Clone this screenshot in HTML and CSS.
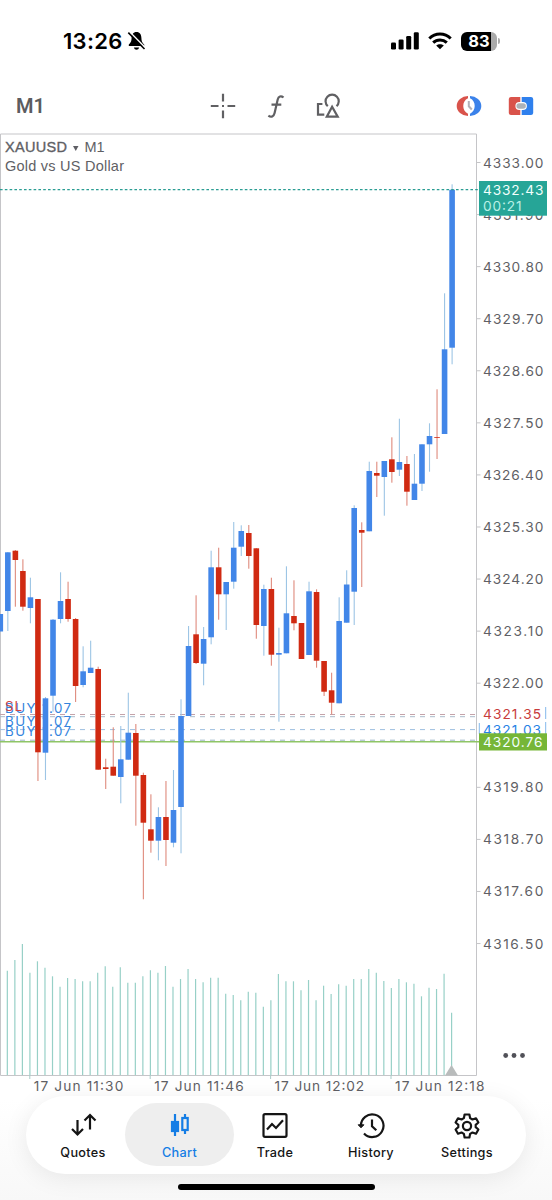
FILE: index.html
```html
<!DOCTYPE html>
<html lang="en">
<head>
<meta charset="utf-8">
<title>XAUUSD M1</title>
<link rel="stylesheet" href="styles.css">
</head>
<body>
<header class="status">
  <div class="clock">
    <span class="time">13:26</span>
    <svg class="bell" width="19" height="20" viewBox="0 0 18 20">
      <path d="M9 1C5.700 1 4.200 3.600 4.100 7 4 11 2.700 12 1.300 13.600V15H16.700V13.600C15.300 12 14 11 13.900 7 13.800 3.600 12.300 1 9 1Z"/>
      <path d="M6.400 16.500H11.600C11.200 18 10.300 18.700 9 18.700S6.800 18 6.400 16.500Z"/>
      <path d="M2 .8 18.200 17.200" stroke="#fff" stroke-width="1.600"/>
      <path d="M.8 1.600 17 18" stroke="#000" stroke-width="1.600"/>
    </svg>
  </div>
  <div class="signals">
    <svg width="28" height="18" viewBox="0 0 28 18"><rect y="10.500" width="5" height="7" rx="1.300"/><rect x="7.600" y="7.500" width="5" height="10" rx="1.300"/><rect x="15.200" y="4" width="5" height="13.500" rx="1.300"/><rect x="22.800" y=".3" width="5" height="17.200" rx="1.300"/></svg>
    <svg width="24" height="18" viewBox="0 0 24 18"><g fill="none" stroke="#000" stroke-width="3"><path d="M1.300 6.500C7.300.6 16.700.6 22.700 6.500"/><path d="M5.200 10.600C9 7 15 7 18.800 10.600"/></g><path d="M12 17.300 8.200 13.600C10.300 11.700 13.700 11.700 15.800 13.600Z"/></svg>
    <div class="battery"><span class="level">83</span><i class="cap"></i></div>
  </div>
</header>

<div class="toolbar">
  <span class="frame">M1</span>
  <div class="tools">
    <svg width="26" height="26" viewBox="0 0 26 26" class="line"><path d="M13 .8V8.500M13 17.500V25.200M.8 13H8.500M17.500 13H25.200M12 13H14"/></svg>
    <svg width="18" height="26" viewBox="0 0 18 26" class="line"><path d="M16.500 4.500C14 2.300 11.500 3.200 10.700 6.500L7.600 20C6.800 23.500 4.200 24.800 1.400 22.600M4.500 11.700H14.300"/></svg>
    <svg width="26" height="26" viewBox="0 0 26 26" class="line"><path d="M6.400 11H2V21.600H8.300"/><path d="M11.800 13.200A6.600 6.600 0 1 1 20.500 13.200" /><path d="M16.100 13.800 10.800 23.700H21.700Z"/></svg>
  </div>
  <div class="trade-tools">
    <svg width="26" height="22" viewBox="0 0 26 22"><path d="M12 1A11.300 10 0 0 0 12 21V18.700C5.700 16 5.700 6 12 3.300Z" fill="#d9534b"/><path d="M14 1A11.300 10 0 0 1 14 21V18.700C20.300 16 20.300 6 14 3.300Z" fill="#3b82ea"/><path d="M12.800 6V11.300L15.800 14.500" fill="none" stroke="#b1b1b8" stroke-width="2"/></svg>
    <svg width="26" height="20" viewBox="0 0 26 20"><path d="M3 1H12.300V19H3A2.200 2.200 0 0 1 .8 17V3A2.200 2.200 0 0 1 3 1Z" fill="#d9534b"/><path d="M13.700 1H23A2.200 2.200 0 0 1 25.200 3V17A2.200 2.200 0 0 1 23 19H13.700Z" fill="#2f80ed"/><rect x="7.400" y="6" width="11.500" height="8" rx="4" fill="#fff"/><rect x="8.400" y="7.200" width="9.500" height="5.600" rx="2.800" fill="#adb2b8"/></svg>
  </div>
</div>

<main class="chart-area">
  <svg class="chart" width="552" height="970" viewBox="0 130 552 970">
    <path class="axis" d="M.5 134V1075.500H476.500V134Z"/>
    <g id="volumes" class="volume"></g>
    <path d="M451.500 1065 458 1075.500H445Z" fill="#b9bcbc"/>
    <g id="axis-labels" class="label"></g>
    <path class="guide" d="M0 714.500H476" stroke="#c4a3aa"/>
    <path class="guide" d="M0 716.700H476" stroke="#a9bccb"/>
    <path class="guide" d="M0 729.600H476" stroke="#9dbfe0"/>
    <path class="guide" d="M0 740.200H476" stroke="#9cb4c6"/>
    <path d="M0 741.800H480" stroke="#8fc566" stroke-width="1.500"/>
    <g class="order">
      <text x="5" y="713" textLength="66">BUY 1.07</text>
      <text x="5" y="725.500" textLength="66">BUY 1.07</text>
      <text x="5" y="736" textLength="66">BUY 1.07</text>
      <text x="5" y="710.500" textLength="17" class="stop">SL</text>
    </g>
    <g id="candles"></g>
    <path d="M0 189.600H479" stroke="#2a9d93" stroke-width="1.300" stroke-dasharray="2.600 2.200"/>
    <g class="label">
      <text class="symbol" x="5" y="152" textLength="62">XAUUSD</text>
      <path d="M73 146H78.500L75.750 151Z"/>
      <text class="name" x="84.500" y="152" textLength="20">M1</text>
      <text class="name" x="5" y="170.500" textLength="119">Gold vs US Dollar</text>
    </g>
    <g class="tag">
      <rect x="479" y="181" width="68" height="34.700" fill="#26a597"/>
      <text x="483" y="194.600" textLength="60.500">4332.43</text>
      <text x="483" y="211" textLength="38.500" class="timer">00:21</text>
      <rect x="478.500" y="705" width="68" height="36" fill="#fff"/>
      <text x="483" y="719" textLength="58" class="sell">4321.35</text>
      <text x="483" y="734.500" textLength="58" class="buy">4321.03</text>
      <path d="M479.300 723V734M545.700 707V719M545.700 722V734" stroke="#83b8ec"/>
      <rect x="479" y="733.300" width="68" height="17.200" fill="#76b637"/>
      <text x="483" y="746.800" textLength="59.500">4320.76</text>
    </g>
    <g fill="#515158"><circle cx="505.700" cy="1055.500" r="2.400"/><circle cx="514" cy="1055.500" r="2.400"/><circle cx="522.500" cy="1055.500" r="2.400"/></g>
  </svg>
</main>

<footer class="bottom">
  <nav class="tabs">
    <a class="tab"><svg width="28" height="26" viewBox="0 0 28 26"><path d="M8.500 7V21.500M3 16 8.500 21.500 14 16M21 16.500V2M15.500 7.500 21 2 26.500 7.500"/></svg>Quotes</a>
    <a class="tab active"><svg width="28" height="26" viewBox="0 0 28 26"><path d="M9 1V23M19 1V5M19 17V21"/><rect x="6" y="9" width="6" height="9" fill="currentColor"/><rect x="16.300" y="5" width="5.400" height="12"/></svg>Chart</a>
    <a class="tab"><svg width="28" height="26" viewBox="0 0 28 26"><rect x="2.500" y="1.200" width="23" height="22.600" rx="1.500"/><path d="M6 16.500 11 11 15 15 22 7.300"/></svg>Trade</a>
    <a class="tab"><svg width="28" height="26" viewBox="0 0 28 26"><path d="M3.900 13A11.300 11.300 0 1 1 7 20.500M15 6.500V13.200L19.300 17.300"/><path d="M1.200 11.800 4 14.800 6.900 11.800Z" fill="currentColor" stroke-width="1"/></svg>History</a>
    <a class="tab"><svg width="28" height="26" viewBox="0 0 28 26"><path d="M11.600 1.500H16.400L17.100 5.100 19.500 6.500 23 5.300 25.400 9.500 22.700 11.800V14.200L25.400 16.500 23 20.700 19.500 19.500 17.100 20.900 16.400 24.500H11.600L10.900 20.900 8.500 19.500 5 20.700 2.600 16.500 5.300 14.200V11.800L2.600 9.500 5 5.300 8.500 6.500 10.900 5.100Z" stroke-linejoin="round"/><circle cx="14" cy="13" r="4.100"/></svg>Settings</a>
  </nav>
  <div class="home"></div>
</footer>
<script src="chart.js"></script>
</body>
</html>
```

FILE: styles.css
```css
body {
  margin: 0;
  width: 552px;
  height: 1200px;
  overflow: hidden;
  display: flex;
  flex-direction: column;
  background: #fff;
  font-family: Inter, "Liberation Sans", sans-serif;
}

.status {
  height: 70px;
  box-sizing: border-box;
  padding: 12px 52px 0 63px;
  display: flex;
  align-items: center;
  justify-content: space-between;
}

.clock, .signals, .battery, .tools, .trade-tools {
  display: flex;
  align-items: center;
}

.clock { gap: 4px; }
.time { font-size: 22px; font-weight: 600; letter-spacing: .3px; line-height: 24px; }
.signals { gap: 9px; }
.battery { gap: 1px; }

.level {
  width: 36px;
  height: 19px;
  border-radius: 6px;
  background: linear-gradient(90deg, #000 83%, #aaa 83%);
  color: #fff;
  font-size: 16.5px;
  font-weight: 700;
  line-height: 19px;
  text-align: center;
}

.cap { width: 2px; height: 6px; border-radius: 0 2px 2px 0; background: #aaa; }

.toolbar {
  height: 60px;
  box-sizing: border-box;
  padding: 11px 18px 0 16px;
  display: grid;
  grid-template-columns: 194px 1fr auto;
  align-items: center;
}

.frame { color: #5c5c60; font: 600 20px/26px Roboto, sans-serif; }
.tools { gap: 31px; }
.trade-tools { gap: 26px; }
.line { fill: none; stroke: #606063; stroke-width: 2.2; }

.chart-area { height: 970px; }
.chart { display: block; }
.axis { fill: none; stroke: #c5c5c8; }
.volume { stroke: #97d0c7; stroke-width: 1.2; }
.label { fill: #5f5f65; }
.label text, .tag text { font-size: 13.7px; }
.tag text { fill: #f2fffc; }
.tag .sell { fill: #c83c3c; }
.tag .buy { fill: #2682e5; }
.tag .timer { fill: #b9f0e6; }
.label .symbol { font: 500 14.5px "Liberation Sans", sans-serif; stroke: #5f5f65; stroke-width: .35; }
.label .name { font: 14.5px "Liberation Sans", sans-serif; }
.guide { stroke-dasharray: 5 5; }
.order text { font-size: 13.3px; fill: #3484dd; }
.order .stop { fill: #cf4545; }
.up { fill: #4286e8; }
.down { fill: #d02a12; }
.wick-up { fill: #9dc5e5; }
.wick-down { fill: #df8b7d; }

.bottom {
  flex: 1;
  display: flex;
  flex-direction: column;
  align-items: center;
  background: linear-gradient(#fff, #f8f8f8);
}

.tabs {
  width: 500px;
  height: 78px;
  box-sizing: border-box;
  margin-top: -4px;
  padding: 7px 11px 8px 9px;
  border-radius: 39px;
  display: grid;
  grid-template-columns: repeat(5, 96px);
  background: #fff;
  box-shadow: 0 4px 24px #00000014;
}

.tab {
  display: flex;
  flex-direction: column;
  align-items: center;
  padding-top: 10px;
  gap: 6px;
  font-size: 12.7px;
  font-weight: 500;
  line-height: 16px;
  letter-spacing: .3px;
  color: #151515;
}

.tab svg { fill: none; stroke: currentColor; stroke-width: 2.2; }
.active { margin: 0 -7px 0 -6px; border-radius: 32px; background: #eee; color: #147de5; }
.home { width: 197px; height: 6px; margin-top: 10px; border-radius: 3px; background: #000; }
```

FILE: chart.js
```js
const NS = 'http://www.w3.org/2000/svg';
const step = 7.53;
const xAt = i => 0.3 + i * step;

function add(parent, tag, attrs, text) {
  const el = document.createElementNS(NS, tag);
  for (const key in attrs) el.setAttribute(key, attrs[key]);
  if (text) el.textContent = text;
  parent.appendChild(el);
}

// direction, body top, body bottom, high, low
const candles = [
  'u',614,631.5,614,631.5, 'u',552.3,611,552,631, 'd',550.7,560,550,606.7, 'd',571,606.7,559.3,610.7,
  'u',597.3,608,577.7,623.3, 'd',599,752.3,599,781, 'u',698.3,752.7,697,780, 'u',619.7,695.7,619,711.7,
  'u',601,619,572.3,623.3, 'd',599,619,581.7,621.7, 'd',619,686,618,702, 'u',671.3,685,646.3,687.3,
  'u',667.7,673,640.7,673, 'd',669,769.7,666.7,769.7, 'd',767.3,769,758.7,789, 'd',766.7,775.7,727.3,775.7,
  'u',759.3,777,726,803.3, 'u',732.7,759.7,692.7,759.7, 'd',733,775.7,724,825.7, 'd',775,822.7,772.7,899.3,
  'd',829.3,840.7,794.3,852.7, 'u',817,840.7,807.3,860.3, 'd',817,840,781,866, 'u',810,842.7,770,847.3,
  'u',716,807,699.3,853.3, 'u',646,716,626,716, 'd',634.3,663,595.3,664, 'u',639,663.7,627,685.3,
  'u',567.3,637.3,550.7,644.3, 'd',567.3,594.3,547.7,619.7, 'u',582,594.3,582,630, 'u',547.7,581.7,522,588.7,
  'u',531,546.7,525.3,556, 'd',533,556,525,568.7, 'd',548.3,625,548,638.7, 'u',589,626,584.7,655.7,
  'd',589,654.7,577.7,665.7, 'u',653,654.7,627.7,721.7, 'u',613.3,653.3,566.3,653.3, 'd',616,623.3,580.3,630.3,
  'd',623,659,623,659, 'u',591.3,655,581.7,655, 'd',592,660.7,589.3,667.7, 'd',661,691.7,661,696,
  'd',690.3,702.7,672.7,714.3, 'u',621,703.3,597.3,703.3, 'u',584.5,622.7,570.3,622.7, 'u',508,591.7,505.3,625,
  'd',530,532.7,522.3,587, 'u',471,531.3,461.7,531.3, 'd',473,475.7,461.7,497, 'u',461,477,461,515.7,
  'd',459.3,472,437.3,482.7, 'u',462,469.7,418.7,476, 'd',464,491.7,456,505.7, 'u',483.7,500,454,500,
  'u',444.3,483.7,444.3,491, 'u',436,444.3,423.3,471.7, 'd',437,437.8,389.3,459, 'u',349.3,434,293.3,434,
  'u',189.7,347.7,184.3,364.3
];

const candleLayer = document.getElementById('candles');
for (let i = 0; i * 5 < candles.length; i++) {
  const [dir, top, bottom, high, low] = candles.slice(i * 5, i * 5 + 5);
  const side = dir === 'u' ? 'up' : 'down';
  const x = xAt(i);
  add(candleLayer, 'rect', { class: 'wick-' + side, x: x - 0.55, y: high, width: 1.1, height: low - high });
  add(candleLayer, 'rect', { class: side, x: x - 2.8, y: top, width: 5.6, height: bottom - top });
}

const volumes = [
  970.7,960,944,972.7,961.3,967.7,976.3,986.7,978,979,981.3,981.3,972.7,966.3,986.7,967.3,982.7,982.7,976.3,970.3,
  972.7,966,986.7,979,969,979,982.3,977.7,977.7,993.7,995,1000.3,991.7,992.7,1006.7,1000.3,974,981.3,981.3,990.3,
  980,1000.3,985.7,994,984.3,985.7,979,979,969,972.7,981,988,979,982.3,983.7,996.3,987.7,989,973.7,1012.7
];
const volumeLayer = document.getElementById('volumes');
volumes.forEach((y, i) => add(volumeLayer, 'path', { d: `M${xAt(i + 1) - 0.5} ${y}V1075` }));

const labels = document.getElementById('axis-labels');
for (let i = 0; i < 16; i++) {
  if (i === 11) continue;
  const y = 162.5 + i * 52.07;
  add(labels, 'path', { d: `M477 ${y}H480.500`, stroke: '#c5c5c8' });
  add(labels, 'text', { x: 483, y: y + 5, textLength: 60.5 }, (4333 - i * 1.1).toFixed(2));
}
['11:30', '11:46', '12:02', '12:18'].forEach((time, i) => {
  const x = 29.8 + i * 120.4;
  add(labels, 'path', { d: `M${x} 1075V1079`, stroke: '#a9cbc8' });
  add(labels, 'text', { x: x + 4, y: 1091, textLength: 89.5 }, '17 Jun ' + time);
});
```
